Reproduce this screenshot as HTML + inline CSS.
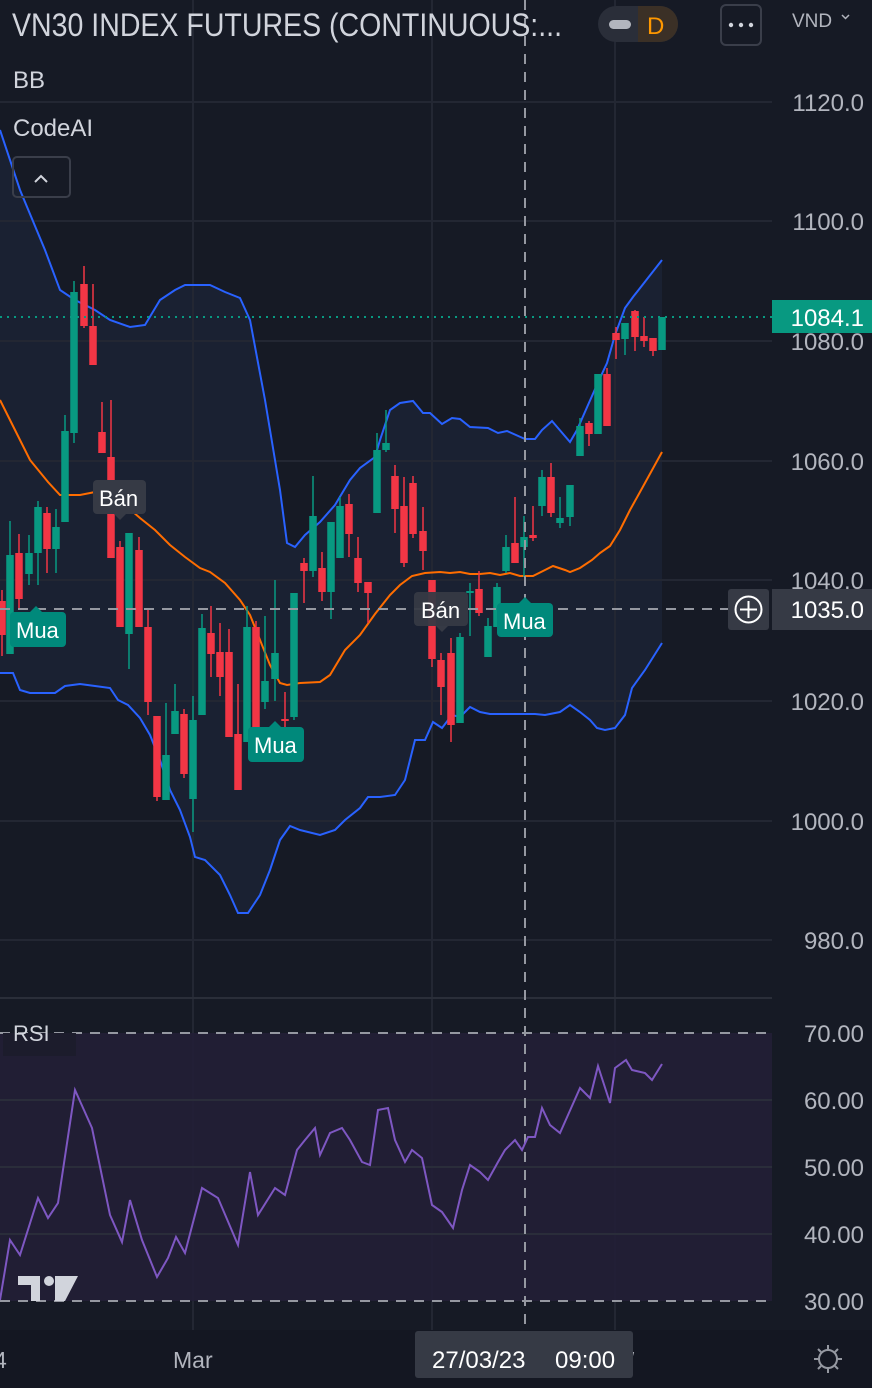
<!DOCTYPE html>
<html><head><meta charset="utf-8"><style>
html,body{margin:0;padding:0;background:#161a25;width:872px;height:1388px;overflow:hidden}
svg{display:block}
text{font-family:"Liberation Sans",sans-serif}
</style></head><body>
<svg id="s" width="872" height="1388" viewBox="0 0 872 1388" xmlns="http://www.w3.org/2000/svg">
<rect width="872" height="1388" fill="#161a25"/>
<polygon id="bandfill" fill="#1a2132"/>
<g stroke="#232733" stroke-width="2">
<line x1="0" y1="102" x2="772" y2="102"/><line x1="0" y1="221" x2="772" y2="221"/>
<line x1="0" y1="341" x2="772" y2="341"/><line x1="0" y1="461" x2="772" y2="461"/>
<line x1="0" y1="580" x2="772" y2="580"/><line x1="0" y1="701" x2="772" y2="701"/>
<line x1="0" y1="821" x2="772" y2="821"/><line x1="0" y1="940" x2="772" y2="940"/>
<line x1="193" y1="0" x2="193" y2="1330"/><line x1="432" y1="0" x2="432" y2="1330"/><line x1="615" y1="0" x2="615" y2="1330"/>
</g>
<rect x="0" y="1033" width="772" height="268" fill="#221f36" opacity="0.9"/>
<g stroke="#2a2d3a" stroke-width="2"><line x1="0" y1="1100" x2="772" y2="1100"/><line x1="0" y1="1167" x2="772" y2="1167"/><line x1="0" y1="1234" x2="772" y2="1234"/></g>
<line x1="0" y1="998" x2="872" y2="998" stroke="#2a2e39" stroke-width="2"/>
<rect x="0" y="1330" width="872" height="58" fill="#141722"/>
<rect x="772" y="0" width="100" height="1330" fill="#161a25"/>
<polyline id="up" fill="none" stroke="#2962ff" stroke-width="2"/>
<polyline id="mid" fill="none" stroke="#ff6d00" stroke-width="2"/>
<polyline id="lo" fill="none" stroke="#2962ff" stroke-width="2"/>
<g id="candles"></g>
<line x1="0" y1="317" x2="772" y2="317" stroke="#089981" stroke-width="2" stroke-dasharray="2,5"/>
<line x1="525" y1="0" x2="525" y2="1330" stroke="#9598a1" stroke-width="2" stroke-dasharray="10,8"/>
<line x1="0" y1="609" x2="730" y2="609" stroke="#9598a1" stroke-width="2" stroke-dasharray="10,8"/>
<line x1="0" y1="1033" x2="772" y2="1033" stroke="#9598a1" stroke-width="2" stroke-dasharray="10,8"/>
<line x1="0" y1="1301" x2="772" y2="1301" stroke="#9598a1" stroke-width="2" stroke-dasharray="10,8"/>
<polyline id="rsi" fill="none" stroke="#7e57c2" stroke-width="2"/>
<g font-size="22" fill="#fff">
<rect x="10" y="612" width="56" height="35" rx="4" fill="#00897b"/><path d="M30 612 l6 -6 l6 6z" fill="#00897b"/><text x="16" y="638">Mua</text>
<rect x="248" y="727" width="56" height="35" rx="4" fill="#00897b"/><path d="M269 727 l6 -6 l6 6z" fill="#00897b"/><text x="254" y="753">Mua</text>
<rect x="497" y="603" width="56" height="34" rx="4" fill="#00897b"/><path d="M519 603 l6 -6 l6 6z" fill="#00897b"/><text x="503" y="629">Mua</text>
<rect x="93" y="480" width="53" height="34" rx="4" fill="#363a45"/><path d="M114 514 l6 6 l6 -6z" fill="#363a45"/><text x="99" y="506">Bán</text>
<rect x="414" y="592" width="54" height="34" rx="4" fill="#363a45" opacity="0.95"/><path d="M436 626 l6 6 l6 -6z" fill="#363a45"/><text x="421" y="618">Bán</text>
</g>
<text x="12" y="36" font-size="32" fill="#d1d4dc" textLength="550" lengthAdjust="spacingAndGlyphs">VN30 INDEX FUTURES (CONTINUOUS:...</text>
<rect x="598" y="6" width="80" height="36" rx="18" fill="#2a2e39"/>
<path d="M638 6 h22 a18 18 0 0 1 0 36 h-22z" fill="#3b3026"/>
<rect x="609" y="20" width="22" height="9" rx="4.5" fill="#b2b5be"/>
<text x="647" y="34" font-size="24" fill="#ff9800">D</text>
<rect x="721" y="5" width="40" height="40" rx="5" fill="none" stroke="#3a3e4a" stroke-width="2"/>
<g fill="#d1d4dc"><circle cx="731" cy="25" r="2.2"/><circle cx="741" cy="25" r="2.2"/><circle cx="751" cy="25" r="2.2"/></g>
<text x="792" y="27" font-size="19" fill="#b2b5be">VND</text>
<path d="M842 15 l3.5 3.5 l3.5 -3.5" fill="none" stroke="#b2b5be" stroke-width="1.5"/>
<text x="13" y="88" font-size="24" fill="#d1d4dc">BB</text>
<text x="13" y="136" font-size="24" fill="#d1d4dc">CodeAI</text>
<rect x="13" y="157" width="57" height="40" rx="4" fill="none" stroke="#3a3e4a" stroke-width="2"/>
<path d="M35 182 l6 -6 l6 6" fill="none" stroke="#d1d4dc" stroke-width="2"/>
<g font-size="24" fill="#b2b5be" text-anchor="end">
<text x="864" y="111">1120.0</text><text x="864" y="230">1100.0</text><text x="864" y="350">1080.0</text>
<text x="864" y="470">1060.0</text><text x="864" y="589">1040.0</text><text x="864" y="710">1020.0</text>
<text x="864" y="830">1000.0</text><text x="864" y="949">980.0</text>
<text x="864" y="1042">70.00</text><text x="864" y="1109">60.00</text><text x="864" y="1176">50.00</text>
<text x="864" y="1243">40.00</text><text x="864" y="1310">30.00</text>
</g>
<rect x="772" y="300" width="100" height="33" fill="#089981"/>
<text x="864" y="326" font-size="24" fill="#fff" text-anchor="end">1084.1</text>
<rect x="728" y="589" width="41" height="41" rx="3" fill="#363a45"/>
<circle cx="748.5" cy="609.5" r="13" fill="none" stroke="#fff" stroke-width="2"/>
<path d="M748.5 601v17M740 609.5h17" stroke="#fff" stroke-width="2"/>
<rect x="772" y="589" width="100" height="41" fill="#363a45"/>
<text x="864" y="618" font-size="24" fill="#fff" text-anchor="end">1035.0</text>
<rect x="3" y="1033" width="73" height="23" fill="#1c1c2c"/>
<text x="13" y="1041" font-size="22" fill="#d1d4dc">RSI</text>
<path d="M18 1276h22v25h-9v-16h-13z M55 1276h23l-13 25h-10z" fill="#d1d4dc"/>
<circle cx="49" cy="1281" r="5" fill="#d1d4dc"/>
<text x="-6" y="1368" font-size="23" fill="#b2b5be">4</text>
<text x="173" y="1368" font-size="23" fill="#b2b5be">Mar</text>
<text x="628" y="1368" font-size="22" fill="#b2b5be">/</text>
<rect x="415" y="1331" width="218" height="47" rx="3" fill="#363a45"/>
<text x="432" y="1368" font-size="24" fill="#fff">27/03/23</text>
<text x="555" y="1368" font-size="24" fill="#fff">09:00</text>
<g stroke="#9598a1" stroke-width="2" fill="none"><circle cx="828" cy="1359" r="9"/>
<path d="M828 1345v5M828 1368v5M814 1359h5M837 1359h5M818 1349l3 3M835 1366l3 3M838 1349l-3 3M818 1369l3-3"/></g>
</svg>
<script>
var up=[[0,130],[20,190],[45,250],[60,290],[75,300],[95,310],[110,320],[130,327],[145,325],[160,300],[175,290],[185,285],[210,285],[225,292],[240,298],[250,320],[265,400],[280,490],[287,543],[295,547],[305,535],[320,522],[335,505],[350,480],[360,468],[375,457],[380,440],[390,410],[400,403],[413,401],[423,413],[430,413],[442,424],[452,418],[460,419],[470,427],[488,428],[498,433],[507,431],[525,439],[535,439],[542,430],[552,421],[570,442],[577,430],[588,405],[600,378],[607,363],[615,335],[625,308],[633,297],[662,260]];
var mid=[[0,400],[15,430],[30,460],[48,482],[60,495],[80,495],[95,492],[110,495],[125,505],[140,518],[155,530],[170,545],[185,557],[200,568],[210,572],[225,583],[240,600],[250,615],[260,640],[270,665],[280,683],[287,685],[300,683],[320,682],[330,675],[345,650],[360,635],[375,614],[390,595],[400,585],[412,576],[425,573],[440,572],[450,573],[460,572],[470,574],[480,574],[490,573],[500,575],[510,573],[520,576],[533,576],[545,570],[553,566],[565,570],[570,572],[580,568],[592,560],[600,553],[610,546],[620,530],[630,510],[640,492],[662,452]];
var lo=[[0,673],[13,673],[20,690],[30,693],[55,693],[65,686],[80,684],[95,686],[110,688],[118,700],[128,705],[140,718],[150,735],[160,760],[170,790],[180,810],[190,837],[195,857],[205,860],[220,875],[230,895],[238,913],[248,913],[260,895],[270,870],[280,840],[290,826],[300,830],[320,835],[335,830],[345,820],[360,808],[368,797],[380,797],[395,795],[405,780],[415,740],[425,740],[433,722],[442,728],[452,715],[460,717],[470,707],[480,712],[490,714],[510,714],[535,714],[545,715],[560,712],[570,705],[580,712],[590,720],[597,728],[605,730],[615,728],[625,715],[632,688],[645,670],[662,643]];
var rsi=[[0,1300],[10,1240],[20,1255],[38,1198],[48,1218],[58,1203],[75,1090],[92,1128],[110,1215],[122,1242],[130,1200],[142,1240],[157,1277],[168,1258],[176,1237],[185,1253],[202,1188],[218,1198],[238,1245],[250,1172],[258,1215],[275,1188],[285,1195],[297,1150],[305,1140],[315,1128],[320,1155],[330,1133],[342,1128],[350,1140],[362,1162],[370,1165],[378,1110],[388,1108],[395,1140],[405,1162],[412,1150],[422,1158],[432,1205],[442,1212],[453,1228],[462,1190],[470,1165],[480,1172],[488,1180],[498,1162],[505,1150],[515,1140],[522,1150],[528,1137],[535,1137],[542,1108],[550,1125],[560,1133],[568,1115],[580,1088],[590,1098],[598,1066],[610,1103],[615,1068],[626,1060],[632,1070],[645,1073],[652,1080],[662,1064]];
function pts(a){return a.map(function(p){return p.join(',')}).join(' ')}
document.getElementById('up').setAttribute('points',pts(up));
document.getElementById('mid').setAttribute('points',pts(mid));
document.getElementById('lo').setAttribute('points',pts(lo));
document.getElementById('rsi').setAttribute('points',pts(rsi));
document.getElementById('bandfill').setAttribute('points',pts(up)+' '+pts(lo.slice().reverse()));
var C=[[2,601,635,590,656,'r'],[10,555,654,521,654,'g'],[19,553,599,534,610,'r'],[29,553,574,535,585,'g'],[38,507,553,501,585,'g'],[47,513,549,507,573,'r'],[56,527,549,509,573,'g'],[65,431,522,415,522,'g'],[74,292,433,281,443,'g'],[84,284,326,266,328,'r'],[93,326,365,284,365,'r'],[102,432,453,402,453,'r'],[111,457,558,400,558,'r'],[120,547,627,541,627,'r'],[129,533,634,533,669,'g'],[139,550,627,537,627,'r'],[148,627,702,608,715,'r'],[157,716,797,716,801,'r'],[166,755,800,703,800,'g'],[175,711,734,684,734,'g'],[184,714,774,709,778,'r'],[193,720,799,696,832,'g'],[202,628,715,614,715,'g'],[211,633,654,606,677,'r'],[220,652,677,623,696,'r'],[229,652,737,629,737,'r'],[238,734,790,684,790,'r'],[247,627,742,606,742,'g'],[256,627,727,621,727,'r'],[265,681,702,616,709,'g'],[275,653,679,580,701,'g'],[285,719,721,692,727,'r'],[294,593,717,593,720,'g'],[304,563,571,558,603,'r'],[313,516,571,476,577,'g'],[322,568,592,552,601,'r'],[331,522,592,522,619,'g'],[340,506,558,497,558,'g'],[349,504,534,494,557,'r'],[358,558,583,537,592,'r'],[368,582,593,582,623,'r'],[377,450,513,433,513,'g'],[386,443,450,410,452,'g'],[395,476,509,465,533,'r'],[404,506,563,477,567,'r'],[413,483,534,476,538,'r'],[423,531,551,507,570,'r'],[432,580,659,580,667,'r'],[441,660,687,653,715,'r'],[451,653,725,638,742,'r'],[460,637,723,633,723,'g'],[470,591,593,583,636,'g'],[479,589,613,571,616,'r'],[488,626,657,618,657,'g'],[497,587,627,583,627,'g'],[506,547,571,535,573,'g'],[515,543,563,497,563,'r'],[524,537,547,516,577,'g'],[533,535,538,506,541,'r'],[542,477,506,470,516,'g'],[551,477,513,463,517,'r'],[560,518,523,497,528,'g'],[570,485,517,485,526,'g'],[580,426,456,418,456,'g'],[589,423,434,421,446,'r'],[598,374,434,374,434,'g'],[607,374,426,368,426,'r'],[616,333,340,327,359,'r'],[625,323,339,323,355,'g'],[635,311,337,310,351,'r'],[644,336,341,317,347,'r'],[653,338,351,338,356,'r'],[662,317,350,317,350,'g']];
var s='';C.forEach(function(c){var col=c[5]=='g'?'#089981':'#f23645';
s+='<rect x="'+(c[0]-0.75)+'" y="'+c[3]+'" width="1.5" height="'+(c[4]-c[3])+'" fill="'+col+'"/>';
s+='<rect x="'+(c[0]-3.75)+'" y="'+c[1]+'" width="7.5" height="'+Math.max(2,c[2]-c[1])+'" fill="'+col+'"/>';});
document.getElementById('candles').innerHTML=s;
</script>
</body></html>
